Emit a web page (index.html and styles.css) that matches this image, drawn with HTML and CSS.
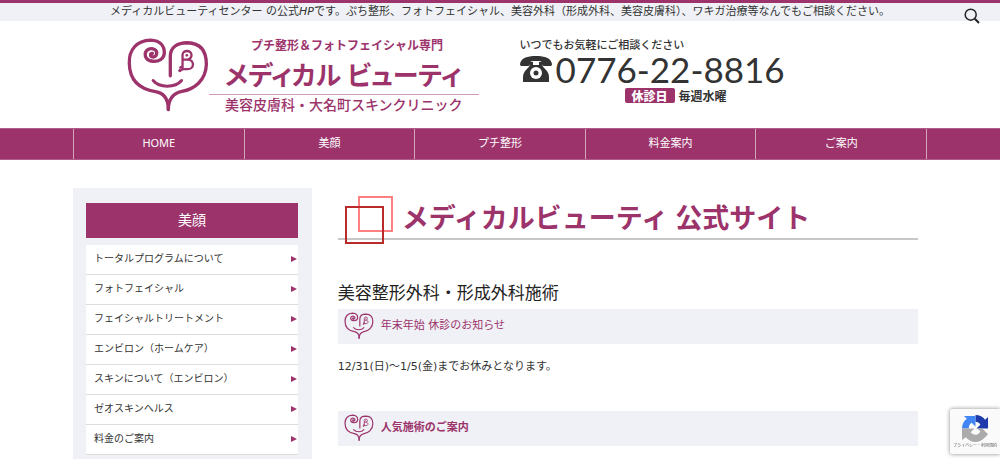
FILE: index.html
```html
<!DOCTYPE html>
<html lang="ja">
<head>
<meta charset="utf-8">
<meta name="viewport" content="width=device-width, initial-scale=1">
<title>メディカルビューティ 公式サイト</title>
<link rel="stylesheet" href="styles.css">
</head>
<body>
<svg class="sprite" aria-hidden="true">
  <symbol id="heart" viewBox="22 20 248 226">
    <g fill="none" stroke="currentColor" stroke-linecap="round" stroke-linejoin="round">
      <path stroke-width="10" d="M147 239C147 205 132 189 108 185C65 178 30 155 29 100C27 58 52 30 93 29C125 30 135 50 135 68C133 87 118 94 101 93C82 92 76 80 77 70C80 55 95 52 105 57C117 64 112 81 100 80C91 79 91 68 99 69"/>
      <path stroke-width="10" d="M153 137V78C153 50 175 37 205 37C248 38 262 65 262 102C261 150 226 178 188 184C160 190 147 207 147 239"/>
      <path stroke-width="9" d="M101 151C120 174 168 174 187 151"/>
      <path stroke-width="7" d="M190 118V74C190 58 217 58 217 74C217 81 213 86 205 88H193M205 88C227 88 227 117 205 117H191M190 108L183 112M190 117L182 121"/>
    </g>
    <circle cx="203" cy="75" r="4" fill="currentColor"/>
    <circle cx="182" cy="121" r="5" fill="currentColor"/>
  </symbol>
</svg>

<p class="lead">メディカルビューティセンター の公式<em>HP</em>です。ぷち整形、フォトフェイシャル、美容外科（形成外科、美容皮膚科）、ワキガ治療等なんでもご相談ください。</p>
<button class="search" type="button" aria-label="検索">
  <svg viewBox="0 0 16 16" fill="none" stroke="currentColor"><circle cx="6.7" cy="6.7" r="5.5" stroke-width="1.5"/><path d="M10.8 10.8L15 15" stroke-width="2"/></svg>
</button>

<header class="header">
  <a class="logo" href="#">
    <svg class="logo-mark" aria-hidden="true"><use href="#heart"/></svg>
    <span class="logo-text">
      <span class="logo-top">プチ整形＆フォトフェイシャル専門</span>
      <span class="logo-name">メディカル ビューティ</span>
      <span class="logo-sub">美容皮膚科・大名町スキンクリニック</span>
    </span>
  </a>
  <div class="contact">
    <span class="contact-note">いつでもお気軽にご相談ください</span>
    <span class="phone">
      <svg viewBox="0 0 32 26" aria-hidden="true">
        <path fill="currentColor" d="M0 8C1 2 7 0 16 0S31 2 32 8C32 10 31 10 29 10H24C22 10 22 9 22 7C22 5 19 5 16 5S10 5 10 7C10 9 10 10 8 10H3C1 10 0 10 0 8Z"/>
        <path fill="currentColor" d="M10 6H13V9H19V6H22V9C24 13 29 15 29 21V26H3V21C3 15 8 13 10 9Z"/>
        <circle cx="16" cy="17" r="6" fill="#fff"/><circle cx="16" cy="17" r="2.5" fill="currentColor"/>
      </svg>
      <span>0776-22-8816</span>
    </span>
    <span class="closed"><b>休診日</b>毎週水曜</span>
  </div>
</header>

<nav class="nav">
  <ul>
    <li><a href="#">HOME</a></li>
    <li><a href="#">美顔</a></li>
    <li><a href="#">プチ整形</a></li>
    <li><a href="#">料金案内</a></li>
    <li><a href="#">ご案内</a></li>
  </ul>
</nav>

<div class="page">
  <aside class="side">
    <h2>美顔</h2>
    <ul>
      <li><a href="#">トータルプログラムについて</a></li>
      <li><a href="#">フォトフェイシャル</a></li>
      <li><a href="#">フェイシャルトリートメント</a></li>
      <li><a href="#">エンビロン（ホームケア）</a></li>
      <li><a href="#">スキンについて（エンビロン）</a></li>
      <li><a href="#">ゼオスキンヘルス</a></li>
      <li><a href="#">料金のご案内</a></li>
    </ul>
  </aside>
  <main class="main">
    <h1>
      <svg viewBox="0 0 48 48" fill="none" stroke-width="2" aria-hidden="true"><rect x="14" y="1" width="33" height="34" stroke="#ff8080"/><rect x="1" y="11" width="37" height="36" stroke="#b92b2b"/></svg>
      メディカルビューティ 公式サイト
    </h1>
    <h2>美容整形外科・形成外科施術</h2>
    <h3><svg aria-hidden="true"><use href="#heart"/></svg>年末年始 休診のお知らせ</h3>
    <p>12/31(日)～1/5(金)までお休みとなります。</p>
    <h3 class="strong"><svg aria-hidden="true"><use href="#heart"/></svg>人気施術のご案内</h3>
  </main>
</div>

<div class="captcha">
  <svg viewBox="0 0 28 28" aria-hidden="true">
    <path fill="#1c3aa9" d="M14 0C18 0 22 2 24 5L27 2V14H15L19 10C18 8 16 7 14 7Z"/>
    <path fill="#4285f4" d="M14 0V12L10 8C8 9 7 11 7 14H0C0 10 2 6 5 4L2 1H14Z"/>
    <path fill="#ababab" d="M0 14H13L9 18C12 22 17 21 19 17L16 14H21L27 20L24 23C18 30 9 29 4 23L0 26Z"/>
  </svg>
  <small>プライバシー・利用規約</small>
</div>
</body>
</html>
```
FILE: styles.css
```css
:root {
  --brand: #9c336b;
  --pale: #eff1f6;
}

* {
  box-sizing: border-box;
}

body {
  margin: 0;
  min-height: 100vh;
  display: flex;
  flex-direction: column;
  background: #fff;
  color: #333;
  font-family: "DejaVu Sans", "Noto Sans CJK JP", sans-serif;
  font-size: 11px;
  line-height: 18px;
}

a {
  color: inherit;
  text-decoration: none;
}

ul,
h1,
h2,
h3,
p {
  margin: 0;
  padding: 0;
  list-style: none;
}

.sprite {
  position: absolute;
  width: 0;
  height: 0;
}

.lead {
  border-top: 3px solid var(--brand);
  background: var(--pale);
  text-align: center;
}

.search {
  position: absolute;
  top: 8px;
  right: 20px;
  width: 16px;
  height: 16px;
  padding: 0;
  border: 0;
  background: none;
  color: #222;
}

.search svg {
  display: block;
}

.header {
  width: 85.4%;
  margin: 0 auto;
  padding: 16px 54px 15px;
  display: flex;
  gap: 41px;
}

.logo {
  display: flex;
  color: var(--brand);
}

.logo-mark {
  width: 82px;
  height: 75px;
}

.logo-text {
  display: flex;
  flex-direction: column;
  font-family: "Noto Sans CJK JP", sans-serif;
  font-weight: 700;
  white-space: nowrap;
}

.logo-top {
  padding-left: 42px;
  font-size: 12px;
  line-height: 16px;
}

.logo-name {
  padding: 0 16px;
  border-bottom: 1px solid #cf9db7;
  font-size: 26px;
  line-height: 41px;
  font-feature-settings: "palt";
}

.logo-sub {
  padding: 0 16px;
  font-size: 14px;
  font-weight: 500;
  line-height: 18px;
}

.contact {
  display: flex;
  flex-direction: column;
  color: #333;
  font-family: "Noto Sans CJK JP", sans-serif;
  font-weight: 700;
}

.contact-note {
  font-weight: 500;
  line-height: 15px;
}

.phone {
  display: flex;
  align-items: center;
  gap: 4px;
  font-family: Lato, sans-serif;
  font-size: 35px;
  font-weight: 400;
  line-height: 34px;
}

.phone svg {
  width: 32px;
  height: 26px;
}

.closed {
  align-self: flex-end;
  display: flex;
  align-items: center;
  gap: 4px;
  padding: 2px 58px 0 0;
  font-size: 12px;
  line-height: 15px;
}

.closed b {
  padding: 0 7px;
  border-radius: 2px;
  background: var(--brand);
  color: #fff;
}

.nav {
  border: 1px solid #b05c88;
  border-width: 1px 0;
  background: var(--brand);
  color: #fff;
  font-family: "Noto Sans", "Noto Sans CJK JP", sans-serif;
}

.nav ul {
  width: 85.4%;
  margin: 0 auto;
  display: flex;
  border-left: 1px solid #d3a5bd;
}

.nav li {
  flex: 1;
  border-right: 1px solid #d3a5bd;
  text-align: center;
}

.nav a {
  display: block;
  line-height: 28px;
  padding-bottom: 2px;
}

.page {
  flex: 1;
  width: 85.4%;
  margin: 28px auto 0;
  display: flex;
}

.side {
  width: 28%;
  padding: 15px 14px 4px 13px;
  background: var(--pale);
}

.side h2 {
  margin-bottom: 7px;
  background: var(--brand);
  color: #fff;
  font-size: 14px;
  font-weight: 400;
  line-height: 35px;
  text-align: center;
}

.side ul {
  background: #fff;
  font-size: 10px;
}

.side li {
  border-bottom: 1px solid #ddd;
}

.side a {
  display: flex;
  justify-content: space-between;
  align-items: center;
  padding: 0 1px 1px 8px;
  line-height: 28px;
}

.side a::after {
  content: "";
  border-left: 6px solid var(--brand);
  border-top: 3px solid transparent;
  border-bottom: 3px solid transparent;
}

.main {
  width: 68%;
  margin-left: 3%;
}

.main h1 {
  position: relative;
  margin-bottom: 38px;
  padding: 10px 0 0 64px;
  border-bottom: 2px solid #c8c8c8;
  color: var(--brand);
  font-family: "Noto Sans", "Noto Sans CJK JP", sans-serif;
  font-size: 27px;
  line-height: 40px;
}

.main h1 svg {
  position: absolute;
  top: 8px;
  left: 7px;
  width: 48px;
  height: 48px;
}

.main h2 {
  color: #222;
  font-size: 17px;
  font-weight: 400;
  line-height: 31px;
}

.main h3 {
  display: flex;
  align-items: center;
  gap: 7px;
  padding: 2px 6px 4px;
  background: var(--pale);
  color: var(--brand);
  font-size: 11px;
  font-weight: 400;
  line-height: 29px;
}

.main h3.strong {
  font-weight: 700;
}

.main h3 svg {
  width: 30px;
  height: 27px;
}

.main p {
  padding: 14px 0 35px;
}

.captcha {
  position: fixed;
  right: 0;
  bottom: 5px;
  width: 50px;
  height: 45px;
  padding-top: 6px;
  overflow: hidden;
  border-radius: 2px 0 0 2px;
  background: #fafafa;
  box-shadow: 0 0 4px #888;
  text-align: center;
}

.captcha svg {
  display: block;
  width: 27px;
  height: 27px;
  margin: 0 auto;
}

.captcha small {
  display: block;
  color: #555;
  font-size: 4px;
  line-height: 8px;
}
```
